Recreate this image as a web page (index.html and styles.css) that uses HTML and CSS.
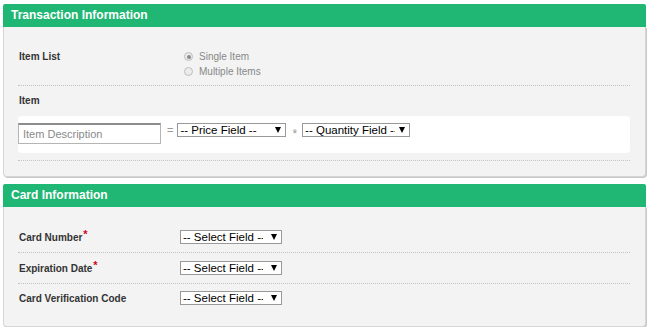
FILE: index.html
```html
<!DOCTYPE html>
<html>
<head>
<meta charset="utf-8">
<link rel="stylesheet" href="styles.css">
</head>
<body>
<div class="panel">
  <div class="panel-head">Transaction Information</div>
  <div class="panel-body">
    <div class="row row-list">
      <div class="label">Item List</div>
      <div class="radios">
        <label class="radio"><input type="radio" name="il" checked disabled><span>Single Item</span></label>
        <label class="radio"><input type="radio" name="il" disabled><span>Multiple Items</span></label>
      </div>
    </div>
    <div class="row row-item">
      <div class="label">Item</div>
      <div class="item-box">
        <input class="desc" type="text" placeholder="Item Description">
        <span class="op eq">=</span>
        <span class="sel sel-price"><select><option>-- Price Field --</option></select></span>
        <span class="op star">*</span>
        <span class="sel sel-qty"><select><option>-- Quantity Field --</option></select></span>
      </div>
    </div>
  </div>
</div>

<div class="panel panel-card">
  <div class="panel-head">Card Information</div>
  <div class="panel-body">
    <div class="crow">
      <div class="label">Card Number<sup class="req">*</sup></div>
      <span class="sel sel-field"><select><option>-- Select Field --</option></select></span>
    </div>
    <div class="crow">
      <div class="label">Expiration Date<sup class="req">*</sup></div>
      <span class="sel sel-field"><select><option>-- Select Field --</option></select></span>
    </div>
    <div class="crow last">
      <div class="label">Card Verification Code</div>
      <span class="sel sel-field"><select><option>-- Select Field --</option></select></span>
    </div>
  </div>
</div>
</body>
</html>
```

FILE: styles.css
```css
html, body {
  margin: 0;
  padding: 0;
  background: #fff;
}
body {
  font-family: "Liberation Sans", Arial, sans-serif;
  padding: 4px 3px 0 3px;
  width: 643px;
}
.panel {
  width: 643px;
}
.panel-card {
  margin-top: 7px;
}
.panel-head {
  height: 23px;
  line-height: 22px;
  background: #20b673;
  color: #fff;
  font-weight: bold;
  font-size: 12px;
  padding-left: 8px;
  border-radius: 2px 2px 0 0;
}
.panel-body {
  background: #f3f3f3;
  border: 1px solid #d6d6d6;
  border-top: none;
  border-radius: 0 0 4px 4px;
  box-shadow: 1px 1px 0 #c8c8c8;
  padding: 0 15px 0 14px;
}
.label {
  font-size: 10px;
  font-weight: bold;
  color: #333;
  width: 165px;
  flex: none;
  padding-left: 1px;
}
.row-list {
  display: flex;
  padding: 22px 0 6px;
  border-bottom: 1px dotted #c4c4c4;
  line-height: 15px;
}
.radios {
  display: flex;
  flex-direction: column;
}
.radio {
  display: flex;
  align-items: center;
  font-size: 10px;
  color: #888;
  height: 15px;
}
.radio input {
  appearance: none;
  -webkit-appearance: none;
  margin: 0 6px 0 0;
  width: 9px;
  height: 9px;
  border: 1px solid #bdbdbd;
  border-radius: 50%;
  background: #ececec;
  box-sizing: border-box;
  position: relative;
}
.radio input:checked::after {
  content: "";
  position: absolute;
  left: 1.5px;
  top: 1.5px;
  width: 4px;
  height: 4px;
  border-radius: 50%;
  background: #8a8a8a;
}
.row-item {
  padding: 7px 0 7px;
  border-bottom: 1px dotted #c4c4c4;
  margin-bottom: 15px;
}
.row-item .label {
  line-height: 15px;
  margin-bottom: 8px;
}
.item-box {
  background: #fff;
  border-radius: 4px;
  height: 37px;
  box-sizing: border-box;
  padding-top: 7px;
  display: flex;
  align-items: flex-start;
}
.desc {
  width: 143px;
  height: 21px;
  box-sizing: border-box;
  border: 1px solid #b5b5b5;
  border-top: 2px solid #8c8c8c;
  padding: 0 4px;
  margin: 0;
  font-family: "Liberation Sans", Arial, sans-serif;
  font-size: 11px;
  background: #fff;
  outline: none;
}
.desc::placeholder {
  color: #8a8a8a;
}
.op {
  color: #999;
  font-size: 11px;
  flex: none;
}
.eq {
  margin: 1px 4px 0 6px;
}
.star {
  margin: 4px 5px 0 6px;
  font-size: 12px;
}
.sel {
  position: relative;
  display: inline-block;
  flex: none;
}
.sel select {
  appearance: none;
  -webkit-appearance: none;
  display: block;
  height: 14px;
  box-sizing: border-box;
  border: 1px solid #999;
  border-radius: 0;
  background: #fff;
  color: #000;
  font-family: "Liberation Sans", Arial, sans-serif;
  font-size: 11.5px;
  line-height: 12px;
  padding: 0 18px 0 2px;
  margin: 0;
  overflow: hidden;
  white-space: nowrap;
}
.sel::after {
  content: "";
  position: absolute;
  right: 5px;
  top: 4px;
  width: 0;
  height: 0;
  border-left: 3.5px solid transparent;
  border-right: 3.5px solid transparent;
  border-top: 6px solid #000;
  pointer-events: none;
}
.sel-price select { width: 109px; }
.sel-qty select { width: 108px; padding-right: 14px; }
.sel-field select { width: 102px; }
.panel-card .panel-body {
  padding-top: 15px;
  padding-bottom: 14px;
}
.crow {
  display: flex;
  align-items: center;
  height: 30px;
  border-bottom: 1px dotted #c4c4c4;
}
.crow.last {
  border-bottom: none;
  height: 28px;
}
.crow .label {
  width: 161px;
}
.req {
  color: #d0021b;
  font-size: 11px;
  line-height: 0;
  vertical-align: 3px;
  margin-left: 1px;
}
```
